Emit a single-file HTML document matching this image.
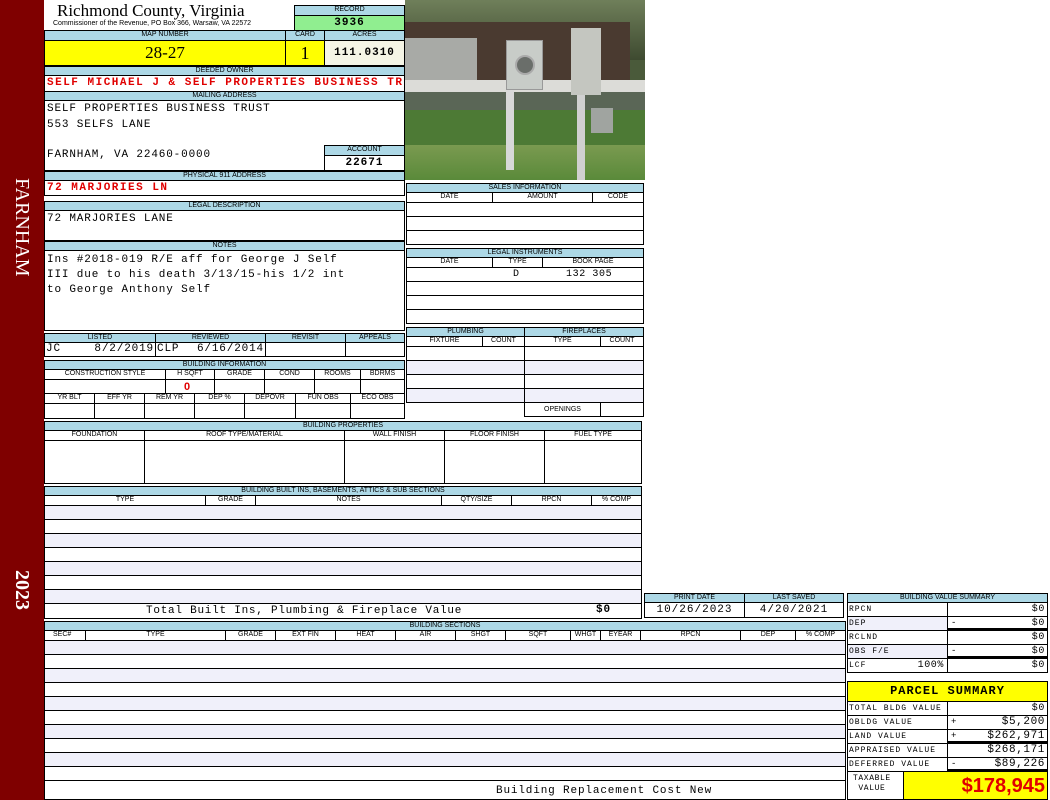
<!DOCTYPE html>
<html><head><meta charset="utf-8"><style>
*{margin:0;padding:0;box-sizing:border-box}
body{width:1050px;height:800px;background:#fff;position:relative;overflow:hidden;font-family:"Liberation Sans",sans-serif}
div{position:absolute}
.h{background:#add8e6;border:1px solid #000;font-size:7px;text-align:center;line-height:8px;color:#000;white-space:nowrap;overflow:hidden}
.b{border:1px solid #000;background:#fff}
.c{border:1px solid #000;font-size:7px;text-align:center;line-height:8px;white-space:nowrap;overflow:hidden}
.m{font-family:"Liberation Mono",monospace;font-size:11px;white-space:nowrap;letter-spacing:0.85px}
.r{color:#e00000;font-weight:bold}
.sh{background:#f0f0fa}
.t{font-family:"Liberation Mono",monospace;font-size:9px;white-space:nowrap;line-height:13px;letter-spacing:0.6px}
.l{font-size:8px;letter-spacing:1px}
</style></head><body>
<div style="left:0;top:0;width:44px;height:800px;background:#7f0000"></div>
<div style="left:10px;top:178px;writing-mode:vertical-rl;color:#fff;font-family:'Liberation Serif',serif;font-size:20px;letter-spacing:0px">FARNHAM</div>
<div style="left:10px;top:570px;writing-mode:vertical-rl;color:#fff;font-family:'Liberation Serif',serif;font-size:20px;font-weight:bold">2023</div>

<div style="left:57px;top:1px;font-family:'Liberation Serif',serif;font-size:17px;line-height:20px">Richmond County, Virginia</div>
<div style="left:53px;top:20px;font-size:7px;line-height:8px">Commissioner of the Revenue, PO Box 366, Warsaw, VA 22572</div>
<div class="h" style="left:294px;top:5px;width:111px;height:11px">RECORD</div>
<div class="c" style="left:294px;top:15px;width:111px;height:16px;background:#90ee90;font-family:'Liberation Mono',monospace;font-size:11px;font-weight:bold;line-height:14px;letter-spacing:1px">3936</div>

<div class="h" style="left:44px;top:30px;width:242px;height:11px">MAP NUMBER</div>
<div class="h" style="left:285px;top:30px;width:40px;height:11px">CARD</div>
<div class="h" style="left:324px;top:30px;width:81px;height:11px">ACRES</div>
<div class="c" style="left:44px;top:40px;width:242px;height:26px;background:#ffff00;font-family:'Liberation Serif',serif;font-size:17px;line-height:24px">28-27</div>
<div class="c" style="left:285px;top:40px;width:40px;height:26px;background:#ffff00;font-family:'Liberation Serif',serif;font-size:18px;line-height:24px">1</div>
<div class="c" style="left:324px;top:40px;width:81px;height:26px;background:#f5f5e6;font-family:'Liberation Mono',monospace;font-size:11px;font-weight:bold;line-height:24px;letter-spacing:1px">111.0310</div>

<div class="h" style="left:44px;top:66px;width:361px;height:10px">DEEDED OWNER</div>
<div class="b" style="left:44px;top:75px;width:361px;height:17px;overflow:hidden"><div class="m r" style="left:2px;top:1px;letter-spacing:1.5px">SELF MICHAEL J &amp; SELF PROPERTIES BUSINESS TRUST</div></div>
<div class="h" style="left:44px;top:91px;width:361px;height:10px">MAILING ADDRESS</div>
<div class="b" style="left:44px;top:100px;width:361px;height:71px"></div>
<div class="m" style="left:47px;top:103px">SELF PROPERTIES BUSINESS TRUST</div>
<div class="m" style="left:47px;top:119px">553 SELFS LANE</div>
<div class="m" style="left:47px;top:149px">FARNHAM, VA 22460-0000</div>
<div class="h" style="left:324px;top:145px;width:81px;height:11px">ACCOUNT</div>
<div class="c" style="left:324px;top:155px;width:81px;height:16px;background:#fff;font-family:'Liberation Mono',monospace;font-size:11px;font-weight:bold;line-height:15px;letter-spacing:1px">22671</div>
<div class="h" style="left:44px;top:171px;width:361px;height:10px">PHYSICAL 911 ADDRESS</div>
<div class="b" style="left:44px;top:180px;width:361px;height:16px"><div class="m r" style="left:2px;top:1px;letter-spacing:1.5px">72 MARJORIES LN</div></div>

<div class="h" style="left:44px;top:201px;width:361px;height:10px">LEGAL DESCRIPTION</div>
<div class="b" style="left:44px;top:210px;width:361px;height:31px"><div class="m" style="left:2px;top:2px">72 MARJORIES LANE</div></div>
<div class="h" style="left:44px;top:241px;width:361px;height:10px">NOTES</div>
<div class="b" style="left:44px;top:250px;width:361px;height:81px"><div class="m" style="left:2px;top:2px;line-height:15px">Ins #2018-019 R/E aff for George J Self<br>III due to his death 3/13/15-his 1/2 int<br>to George Anthony Self</div></div>

<!-- photo -->
<div style="left:405px;top:0;width:240px;height:180px;overflow:hidden;background:#4a5a3a">
<div style="left:0;top:0;width:240px;height:60px;background:linear-gradient(#6f7f5a,#3e4a30)"></div>
<div style="left:0;top:22px;width:225px;height:73px;background:#4a3a30"></div>
<div style="left:0;top:38px;width:72px;height:45px;background:#a8aaa6"></div>
<div style="left:0;top:80px;width:240px;height:12px;background:#dcdcd8"></div>
<div style="left:0;top:92px;width:240px;height:20px;background:#5a6656"></div>
<div style="left:0;top:110px;width:240px;height:40px;background:#4d7a35"></div>
<div style="left:0;top:145px;width:240px;height:35px;background:linear-gradient(#7a9a50,#5a8a3a)"></div>
<div style="left:101px;top:40px;width:37px;height:50px;background:#c8ccc8;border:1px solid #999"></div>
<div style="left:110px;top:55px;width:20px;height:20px;border-radius:50%;background:#6a6e6a;border:2px solid #aaa"></div>
<div style="left:166px;top:28px;width:30px;height:67px;background:#c4c6c0"></div>
<div style="left:101px;top:90px;width:8px;height:80px;background:#d8d8d8"></div>
<div style="left:172px;top:95px;width:8px;height:85px;background:#d0d0d0"></div>
<div style="left:186px;top:108px;width:22px;height:25px;background:#a0a4a0"></div>
</div>

<!-- sales -->
<div class="h" style="left:406px;top:183px;width:238px;height:10px">SALES INFORMATION</div>
<div class="c" style="left:406px;top:192px;width:87px;height:11px">DATE</div>
<div class="c" style="left:492px;top:192px;width:101px;height:11px">AMOUNT</div>
<div class="c" style="left:592px;top:192px;width:52px;height:11px">CODE</div>
<div class="b" style="left:406px;top:202px;width:238px;height:15px"></div>
<div class="b" style="left:406px;top:216px;width:238px;height:15px"></div>
<div class="b" style="left:406px;top:230px;width:238px;height:15px"></div>
<div class="h" style="left:406px;top:248px;width:238px;height:10px">LEGAL INSTRUMENTS</div>
<div class="c" style="left:406px;top:257px;width:87px;height:11px">DATE</div>
<div class="c" style="left:492px;top:257px;width:51px;height:11px">TYPE</div>
<div class="c" style="left:542px;top:257px;width:102px;height:11px">BOOK PAGE</div>
<div class="b" style="left:406px;top:267px;width:238px;height:15px"><div class="t" style="left:106px;top:0;font-size:10px">D</div><div class="t" style="left:159px;top:0;font-size:10px">132 305</div></div>
<div class="b" style="left:406px;top:281px;width:238px;height:15px"></div>
<div class="b" style="left:406px;top:295px;width:238px;height:15px"></div>
<div class="b" style="left:406px;top:309px;width:238px;height:15px"></div>

<!-- plumbing -->
<div class="h" style="left:406px;top:327px;width:119px;height:10px">PLUMBING</div>
<div class="h" style="left:524px;top:327px;width:120px;height:10px">FIREPLACES</div>
<div class="c" style="left:406px;top:336px;width:77px;height:11px">FIXTURE</div>
<div class="c" style="left:482px;top:336px;width:43px;height:11px">COUNT</div>
<div class="c" style="left:524px;top:336px;width:77px;height:11px">TYPE</div>
<div class="c" style="left:600px;top:336px;width:44px;height:11px">COUNT</div>
<div class="b" style="left:406px;top:346px;width:119px;height:15px"></div>
<div class="b sh" style="left:406px;top:360px;width:119px;height:15px"></div>
<div class="b" style="left:406px;top:374px;width:119px;height:15px"></div>
<div class="b sh" style="left:406px;top:388px;width:119px;height:15px"></div>
<div class="b" style="left:524px;top:346px;width:120px;height:15px"></div>
<div class="b sh" style="left:524px;top:360px;width:120px;height:15px"></div>
<div class="b" style="left:524px;top:374px;width:120px;height:15px"></div>
<div class="b sh" style="left:524px;top:388px;width:120px;height:15px"></div>
<div class="c" style="left:524px;top:402px;width:77px;height:15px;line-height:13px">OPENINGS</div>
<div class="b" style="left:600px;top:402px;width:44px;height:15px"></div>

<!-- listed -->
<div class="h" style="left:44px;top:333px;width:112px;height:10px">LISTED</div>
<div class="h" style="left:155px;top:333px;width:111px;height:10px">REVIEWED</div>
<div class="h" style="left:265px;top:333px;width:81px;height:10px">REVISIT</div>
<div class="h" style="left:345px;top:333px;width:60px;height:10px">APPEALS</div>
<div class="b" style="left:44px;top:342px;width:112px;height:15px"><div class="m" style="left:1px;top:0">JC</div><div class="m" style="right:1px;top:0">8/2/2019</div></div>
<div class="b" style="left:155px;top:342px;width:111px;height:15px"><div class="m" style="left:1px;top:0">CLP</div><div class="m" style="right:1px;top:0">6/16/2014</div></div>
<div class="b" style="left:265px;top:342px;width:81px;height:15px"></div>
<div class="b" style="left:345px;top:342px;width:60px;height:15px"></div>

<div class="h" style="left:44px;top:360px;width:361px;height:10px">BUILDING INFORMATION</div>
<div class="c" style="left:44px;top:369px;width:122px;height:11px">CONSTRUCTION STYLE</div>
<div class="c" style="left:165px;top:369px;width:50px;height:11px">H SQFT</div>
<div class="c" style="left:214px;top:369px;width:51px;height:11px">GRADE</div>
<div class="c" style="left:264px;top:369px;width:51px;height:11px">COND</div>
<div class="c" style="left:314px;top:369px;width:47px;height:11px">ROOMS</div>
<div class="c" style="left:360px;top:369px;width:45px;height:11px">BDRMS</div>
<div class="b" style="left:44px;top:379px;width:122px;height:15px"></div>
<div class="b" style="left:165px;top:379px;width:50px;height:15px"><div class="r" style="left:18px;top:1px;font-size:11px">0</div></div>
<div class="b" style="left:214px;top:379px;width:51px;height:15px"></div>
<div class="b" style="left:264px;top:379px;width:51px;height:15px"></div>
<div class="b" style="left:314px;top:379px;width:47px;height:15px"></div>
<div class="b" style="left:360px;top:379px;width:45px;height:15px"></div>
<div class="c" style="left:44px;top:393px;width:51px;height:11px">YR BLT</div>
<div class="c" style="left:94px;top:393px;width:51px;height:11px">EFF YR</div>
<div class="c" style="left:144px;top:393px;width:51px;height:11px">REM YR</div>
<div class="c" style="left:194px;top:393px;width:51px;height:11px">DEP %</div>
<div class="c" style="left:244px;top:393px;width:52px;height:11px">DEPOVR</div>
<div class="c" style="left:295px;top:393px;width:56px;height:11px">FUN OBS</div>
<div class="c" style="left:350px;top:393px;width:55px;height:11px">ECO OBS</div>
<div class="b" style="left:44px;top:403px;width:51px;height:16px"></div>
<div class="b" style="left:94px;top:403px;width:51px;height:16px"></div>
<div class="b" style="left:144px;top:403px;width:51px;height:16px"></div>
<div class="b" style="left:194px;top:403px;width:51px;height:16px"></div>
<div class="b" style="left:244px;top:403px;width:52px;height:16px"></div>
<div class="b" style="left:295px;top:403px;width:56px;height:16px"></div>
<div class="b" style="left:350px;top:403px;width:55px;height:16px"></div>

<!-- building properties -->
<div class="h" style="left:44px;top:421px;width:598px;height:10px">BUILDING PROPERTIES</div>
<div class="c" style="left:44px;top:430px;width:101px;height:11px">FOUNDATION</div>
<div class="c" style="left:144px;top:430px;width:201px;height:11px">ROOF TYPE/MATERIAL</div>
<div class="c" style="left:344px;top:430px;width:101px;height:11px">WALL FINISH</div>
<div class="c" style="left:444px;top:430px;width:101px;height:11px">FLOOR FINISH</div>
<div class="c" style="left:544px;top:430px;width:98px;height:11px">FUEL TYPE</div>
<div class="b" style="left:44px;top:440px;width:101px;height:44px"></div>
<div class="b" style="left:144px;top:440px;width:201px;height:44px"></div>
<div class="b" style="left:344px;top:440px;width:101px;height:44px"></div>
<div class="b" style="left:444px;top:440px;width:101px;height:44px"></div>
<div class="b" style="left:544px;top:440px;width:98px;height:44px"></div>

<!-- built ins -->
<div class="h" style="left:44px;top:486px;width:598px;height:10px">BUILDING BUILT INS, BASEMENTS, ATTICS &amp; SUB SECTIONS</div>
<div class="c" style="left:44px;top:495px;width:162px;height:11px">TYPE</div>
<div class="c" style="left:205px;top:495px;width:51px;height:11px">GRADE</div>
<div class="c" style="left:255px;top:495px;width:187px;height:11px">NOTES</div>
<div class="c" style="left:441px;top:495px;width:71px;height:11px">QTY/SIZE</div>
<div class="c" style="left:511px;top:495px;width:81px;height:11px">RPCN</div>
<div class="c" style="left:591px;top:495px;width:51px;height:11px">% COMP</div>
<div class="b sh" style="left:44px;top:505px;width:598px;height:15px"></div>
<div class="b" style="left:44px;top:519px;width:598px;height:15px"></div>
<div class="b sh" style="left:44px;top:533px;width:598px;height:15px"></div>
<div class="b" style="left:44px;top:547px;width:598px;height:15px"></div>
<div class="b sh" style="left:44px;top:561px;width:598px;height:15px"></div>
<div class="b" style="left:44px;top:575px;width:598px;height:15px"></div>
<div class="b sh" style="left:44px;top:589px;width:598px;height:15px"></div>
<div class="b" style="left:44px;top:603px;width:598px;height:16px"><div class="m" style="left:101px;top:1px;letter-spacing:0.75px">Total Built Ins, Plumbing &amp; Fireplace Value</div><div class="m" style="left:551px;top:0;font-weight:bold">$0</div></div>

<div class="h" style="left:644px;top:593px;width:101px;height:10px">PRINT DATE</div>
<div class="h" style="left:744px;top:593px;width:100px;height:10px">LAST SAVED</div>
<div class="c" style="left:644px;top:602px;width:101px;height:16px;font-family:'Liberation Mono',monospace;font-size:11px;line-height:14px;letter-spacing:1px">10/26/2023</div>
<div class="c" style="left:744px;top:602px;width:100px;height:16px;font-family:'Liberation Mono',monospace;font-size:11px;line-height:14px;letter-spacing:1px">4/20/2021</div>

<!-- building sections -->
<div class="h" style="left:44px;top:621px;width:802px;height:10px">BUILDING SECTIONS</div>
<div class="c" style="left:44px;top:630px;width:42px;height:11px;text-align:left;padding-left:8px">SEC#</div>
<div class="c" style="left:85px;top:630px;width:141px;height:11px">TYPE</div>
<div class="c" style="left:225px;top:630px;width:51px;height:11px">GRADE</div>
<div class="c" style="left:275px;top:630px;width:61px;height:11px">EXT FIN</div>
<div class="c" style="left:335px;top:630px;width:61px;height:11px">HEAT</div>
<div class="c" style="left:395px;top:630px;width:61px;height:11px">AIR</div>
<div class="c" style="left:455px;top:630px;width:51px;height:11px">SHGT</div>
<div class="c" style="left:505px;top:630px;width:66px;height:11px">SQFT</div>
<div class="c" style="left:570px;top:630px;width:31px;height:11px">WHGT</div>
<div class="c" style="left:600px;top:630px;width:41px;height:11px">EYEAR</div>
<div class="c" style="left:640px;top:630px;width:101px;height:11px">RPCN</div>
<div class="c" style="left:740px;top:630px;width:56px;height:11px">DEP</div>
<div class="c" style="left:795px;top:630px;width:51px;height:11px">% COMP</div>
<div class="b sh" style="left:44px;top:640px;width:802px;height:15px"></div>
<div class="b" style="left:44px;top:654px;width:802px;height:15px"></div>
<div class="b sh" style="left:44px;top:668px;width:802px;height:15px"></div>
<div class="b" style="left:44px;top:682px;width:802px;height:15px"></div>
<div class="b sh" style="left:44px;top:696px;width:802px;height:15px"></div>
<div class="b" style="left:44px;top:710px;width:802px;height:15px"></div>
<div class="b sh" style="left:44px;top:724px;width:802px;height:15px"></div>
<div class="b" style="left:44px;top:738px;width:802px;height:15px"></div>
<div class="b sh" style="left:44px;top:752px;width:802px;height:15px"></div>
<div class="b" style="left:44px;top:766px;width:802px;height:15px"></div>
<div class="b" style="left:44px;top:780px;width:802px;height:20px"><div class="m" style="left:451px;top:4px">Building Replacement Cost New</div></div>

<!-- value summary -->
<div class="h" style="left:847px;top:593px;width:201px;height:10px">BUILDING VALUE SUMMARY</div>
<div class="b" style="left:847px;top:602px;width:101px;height:15px"><div class="t l" style="left:1px;top:0">RPCN</div></div>
<div class="b" style="left:947px;top:602px;width:101px;height:15px"><div class="t" style="right:2px;top:0;font-size:10px">$0</div></div>
<div class="b sh" style="left:847px;top:616px;width:101px;height:15px"><div class="t l" style="left:1px;top:0">DEP</div></div>
<div class="b" style="left:947px;top:616px;width:101px;height:15px;border-bottom:3px solid #000"><div class="t" style="left:3px;top:0">-</div><div class="t" style="right:2px;top:0;font-size:10px">$0</div></div>
<div class="b" style="left:847px;top:630px;width:101px;height:15px"><div class="t l" style="left:1px;top:0">RCLND</div></div>
<div class="b" style="left:947px;top:630px;width:101px;height:15px"><div class="t" style="right:2px;top:0;font-size:10px">$0</div></div>
<div class="b sh" style="left:847px;top:644px;width:101px;height:15px"><div class="t l" style="left:1px;top:0">OBS F/E</div></div>
<div class="b" style="left:947px;top:644px;width:101px;height:15px;border-bottom:3px solid #000"><div class="t" style="left:3px;top:0">-</div><div class="t" style="right:2px;top:0;font-size:10px">$0</div></div>
<div class="b" style="left:847px;top:658px;width:101px;height:15px"><div class="t l" style="left:1px;top:0">LCF</div><div class="t" style="right:3px;top:0;font-size:10px">100%</div></div>
<div class="b" style="left:947px;top:658px;width:101px;height:15px"><div class="t" style="right:2px;top:0;font-size:10px">$0</div></div>

<div class="b" style="left:847px;top:681px;width:201px;height:21px;background:#ffff00;font-family:'Liberation Mono',monospace;font-size:12px;font-weight:bold;text-align:center;line-height:19px;letter-spacing:1px">PARCEL SUMMARY</div>
<div class="b" style="left:847px;top:701px;width:101px;height:15px"><div class="t l" style="left:1px;top:0">TOTAL BLDG VALUE</div></div>
<div class="b" style="left:947px;top:701px;width:101px;height:15px"><div class="t" style="right:2px;top:0;font-size:10px">$0</div></div>
<div class="b" style="left:847px;top:715px;width:101px;height:15px"><div class="t l" style="left:1px;top:0">OBLDG VALUE</div></div>
<div class="b" style="left:947px;top:715px;width:101px;height:15px"><div class="t" style="left:3px;top:0">+</div><div class="t" style="right:2px;top:0;font-size:11px">$5,200</div></div>
<div class="b" style="left:847px;top:729px;width:101px;height:15px"><div class="t l" style="left:1px;top:0">LAND VALUE</div></div>
<div class="b" style="left:947px;top:729px;width:101px;height:15px;border-bottom:3px solid #000"><div class="t" style="left:3px;top:0">+</div><div class="t" style="right:2px;top:0;font-size:11px">$262,971</div></div>
<div class="b" style="left:847px;top:743px;width:101px;height:15px"><div class="t l" style="left:1px;top:0">APPRAISED VALUE</div></div>
<div class="b" style="left:947px;top:743px;width:101px;height:15px"><div class="t" style="right:2px;top:0;font-size:11px">$268,171</div></div>
<div class="b" style="left:847px;top:757px;width:101px;height:15px"><div class="t l" style="left:1px;top:0">DEFERRED VALUE</div></div>
<div class="b" style="left:947px;top:757px;width:101px;height:15px;border-bottom:3px solid #000"><div class="t" style="left:3px;top:0">-</div><div class="t" style="right:2px;top:0;font-size:11px">$89,226</div></div>
<div class="b" style="left:847px;top:771px;width:57px;height:29px"><div class="t" style="left:5px;top:2px;font-size:8px;line-height:10px;text-align:center">TAXABLE<br>VALUE</div></div>
<div class="b" style="left:903px;top:771px;width:145px;height:29px;background:#ffff00"><div style="right:2px;top:2px;color:#e00000;font-weight:bold;font-size:20px;line-height:24px">$178,945</div></div>
</body></html>
